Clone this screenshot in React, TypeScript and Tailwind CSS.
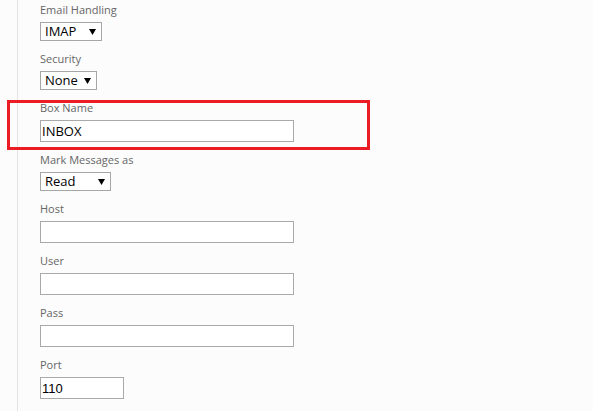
import React from "react";

type Field =
  | { kind: "select"; label: string; value: string; width: string }
  | { kind: "input"; label: string; value: string; width: string; mono?: boolean };

const fields: Field[] = [
  { kind: "select", label: "Email Handling", value: "IMAP", width: "w-[62px]" },
  { kind: "select", label: "Security", value: "None", width: "w-[57px]" },
  { kind: "input", label: "Box Name", value: "INBOX", width: "w-[254px]" },
  { kind: "select", label: "Mark Messages as", value: "Read", width: "w-[71px]" },
  { kind: "input", label: "Host", value: "", width: "w-[254px]" },
  { kind: "input", label: "User", value: "", width: "w-[254px]" },
  { kind: "input", label: "Pass", value: "", width: "w-[254px]" },
  { kind: "input", label: "Port", value: "110", width: "w-[84px]", mono: true },
];

function FakeSelect({ value, width }: { value: string; width: string }) {
  return (
    <div
      className={`${width} h-[19px] mb-[10px] border border-[#a6a6a6] bg-white flex items-center justify-between pl-[4px] pr-[5px] text-[13px] leading-none text-black font-['Open_Sans',sans-serif]`}
    >
      <span>{value}</span>
      <svg width="7" height="6" viewBox="0 0 7 6" className="shrink-0">
        <polygon points="0,0 7,0 3.5,6" fill="#000" />
      </svg>
    </div>
  );
}

function FakeInput({ value, width, mono }: { value: string; width: string; mono?: boolean }) {
  return (
    <div
      className={`${width} h-[22px] mb-[10px] border border-[#a9a9a9] bg-white flex items-center pl-[1px] text-[13px] leading-none text-black ${
        mono ? "font-['Liberation_Sans',Arial,sans-serif]" : "font-['Open_Sans',sans-serif]"
      }`}
    >
      {value}
    </div>
  );
}

export default function App() {
  return (
    <div className="relative w-[593px] h-[411px] overflow-hidden bg-[#fcfcfc] font-['Open_Sans',sans-serif]">
      <div className="ml-[17px] h-full border-l border-[#e4e4e4] pl-[22px] pt-[2px]">
        {fields.map((f) => (
          <div key={f.label} className="flex flex-col items-start">
            <div className="h-[15px] mb-[5px] text-[11px] leading-[15px] text-[#666666]">{f.label}</div>
            {f.kind === "select" ? (
              <FakeSelect value={f.value} width={f.width} />
            ) : (
              <FakeInput value={f.value} width={f.width} mono={f.mono} />
            )}
          </div>
        ))}
      </div>

      {/* annotation highlight around Box Name */}
      <div className="absolute left-[7px] top-[100px] w-[363px] h-[50px] border-[3px] border-[#ec1c24] pointer-events-none" />
    </div>
  );
}
